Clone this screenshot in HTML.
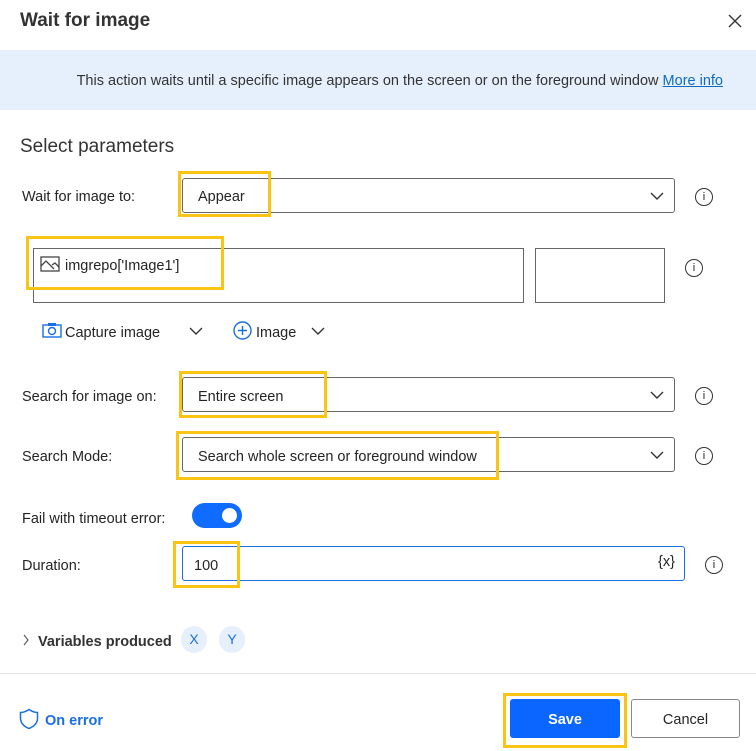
<!DOCTYPE html><html><head><style>
body{margin:0;width:756px;height:751px;background:#fff;font-family:"Liberation Sans",sans-serif;color:#242424;position:relative;overflow:hidden}
.a{position:absolute}
.t{font-size:14.5px;line-height:18px}
.dd{position:absolute;left:182px;width:491px;border:1px solid #666;border-radius:3px;background:#fff}
.yb{position:absolute;border:3px solid #f9c512;box-sizing:border-box}
.chev{position:absolute;right:10px;top:12px}
.info{position:absolute;width:16px;height:16px;border:1.3px solid #333;border-radius:50%;font-size:11px;text-align:center;line-height:16px;font-family:"Liberation Sans",sans-serif}
</style></head><body>
<div class="a" style="left:20px;top:10px;font-size:19px;font-weight:bold;color:#333">Wait for image</div>
<svg class="a" style="left:728px;top:14px" width="14" height="14"><path d="M1 1L13 13M13 1L1 13" stroke="#333" stroke-width="1.4"/></svg>
<div class="a" style="left:0;top:50px;width:756px;height:60px;background:#e6f0fd"></div>
<div class="a t" style="left:0;width:723px;text-align:right;top:72px;color:#333">This action waits until a specific image appears on the screen or on the foreground window <span style="color:#0f6cbd;text-decoration:underline">More info</span></div>
<div class="a" style="left:20px;top:136px;font-size:19px;color:#333">Select parameters</div>

<div class="a t" style="left:22px;top:188px">Wait for image to:</div>
<div class="dd" style="top:178px;height:33px"><div class="a t" style="left:15px;top:9px">Appear</div><svg class="chev" width="14" height="10"><path d="M1 2L7 8L13 2" stroke="#333" fill="none" stroke-width="1.4"/></svg></div>
<div class="yb" style="left:178px;top:171px;width:93px;height:46px"></div>
<div class="info" style="left:695px;top:188px">i</div>

<div class="a" style="left:33px;top:248px;width:489px;height:53px;border:1px solid #666"></div>
<div class="a" style="left:535px;top:248px;width:128px;height:53px;border:1px solid #666"></div>
<svg class="a" style="left:40px;top:256px" width="20" height="16"><rect x="1" y="1" width="18" height="14" fill="none" stroke="#444" stroke-width="1.3"/><path d="M1 10L6 5L14 13M12 9L15 7L19 11" stroke="#444" fill="none" stroke-width="1.3"/></svg>
<div class="a t" style="left:65px;top:257px">imgrepo['Image1']</div>
<div class="yb" style="left:26px;top:236px;width:198px;height:54px"></div>
<div class="info" style="left:685px;top:259px">i</div>

<svg class="a" style="left:42px;top:322px" width="20" height="16"><rect x="1" y="3" width="18" height="12" fill="none" stroke="#1a6fe0" stroke-width="1.4"/><rect x="6" y="1" width="8" height="3" fill="#1a6fe0"/><circle cx="10" cy="9" r="3.5" fill="none" stroke="#1a6fe0" stroke-width="1.4"/></svg>
<div class="a t" style="left:65px;top:324px">Capture image</div>
<svg class="a" style="left:189px;top:326px" width="14" height="10"><path d="M1 2L7 8L13 2" stroke="#333" fill="none" stroke-width="1.4"/></svg>
<svg class="a" style="left:233px;top:321px" width="19" height="19"><circle cx="9.5" cy="9.5" r="8.5" fill="none" stroke="#1a6fe0" stroke-width="1.4"/><path d="M9.5 5V14M5 9.5H14" stroke="#1a6fe0" stroke-width="1.4"/></svg>
<div class="a t" style="left:256px;top:324px">Image</div>
<svg class="a" style="left:311px;top:326px" width="14" height="10"><path d="M1 2L7 8L13 2" stroke="#333" fill="none" stroke-width="1.4"/></svg>

<div class="a t" style="left:22px;top:388px">Search for image on:</div>
<div class="dd" style="top:377px;height:33px"><div class="a t" style="left:15px;top:10px">Entire screen</div><svg class="chev" width="14" height="10"><path d="M1 2L7 8L13 2" stroke="#333" fill="none" stroke-width="1.4"/></svg></div>
<div class="yb" style="left:179px;top:371px;width:148px;height:47px"></div>
<div class="info" style="left:695px;top:387px">i</div>

<div class="a t" style="left:22px;top:448px">Search Mode:</div>
<div class="dd" style="top:437px;height:33px"><div class="a t" style="left:15px;top:10px">Search whole screen or foreground window</div><svg class="chev" width="14" height="10"><path d="M1 2L7 8L13 2" stroke="#333" fill="none" stroke-width="1.4"/></svg></div>
<div class="yb" style="left:176px;top:431px;width:323px;height:49px"></div>
<div class="info" style="left:695px;top:447px">i</div>

<div class="a t" style="left:22px;top:510px">Fail with timeout error:</div>
<div class="a" style="left:192px;top:503px;width:50px;height:25px;border-radius:13px;background:#0f6cff"></div>
<div class="a" style="left:222px;top:508px;width:15px;height:15px;border-radius:50%;background:#fff"></div>

<div class="a t" style="left:22px;top:557px">Duration:</div>
<div class="a" style="left:182px;top:546px;width:501px;height:33px;border:1px solid #1a6fe0;border-radius:3px"></div>
<div class="a t" style="left:194px;top:557px">100</div>
<div class="a t" style="left:658px;top:553px">{x}</div>
<div class="yb" style="left:173px;top:541px;width:67px;height:47px"></div>
<div class="info" style="left:705px;top:556px">i</div>

<svg class="a" style="left:22px;top:634px" width="8" height="12"><path d="M2 1L6 6L2 11" stroke="#555" fill="none" stroke-width="1.1"/></svg>
<div class="a t" style="left:38px;top:633px;font-weight:bold;color:#333">Variables produced</div>
<div class="a" style="left:181px;top:626px;width:26px;height:27px;border-radius:13px;background:#e6f0fd;color:#1a6fe0;font-size:14px;text-align:center;line-height:27px">X</div>
<div class="a" style="left:219px;top:626px;width:26px;height:27px;border-radius:13px;background:#e6f0fd;color:#1a6fe0;font-size:14px;text-align:center;line-height:27px">Y</div>

<div class="a" style="left:0;top:673px;width:756px;height:1px;background:#e4e4e4"></div>
<svg class="a" style="left:19px;top:708px" width="20" height="22"><path d="M10 1.5C7 3.5 4.5 4.5 1.5 4.5V10C1.5 15 5 18.5 10 20.5C15 18.5 18.5 15 18.5 10V4.5C15.5 4.5 13 3.5 10 1.5Z" fill="none" stroke="#1a6fe0" stroke-width="1.5"/></svg>
<div class="a t" style="left:45px;top:712px;color:#1a6fe0;font-weight:bold">On error</div>
<div class="a" style="left:510px;top:699px;width:110px;height:39px;background:#0a66ff;border-radius:3px;color:#fff;font-weight:bold;font-size:14.5px;text-align:center;line-height:42px">Save</div>
<div class="yb" style="left:503px;top:693px;width:124px;height:55px"></div>
<div class="a" style="left:631px;top:699px;width:107px;height:37px;border:1px solid #888;border-radius:3px;color:#242424;font-size:14.5px;text-align:center;line-height:41px">Cancel</div>
</body></html>
